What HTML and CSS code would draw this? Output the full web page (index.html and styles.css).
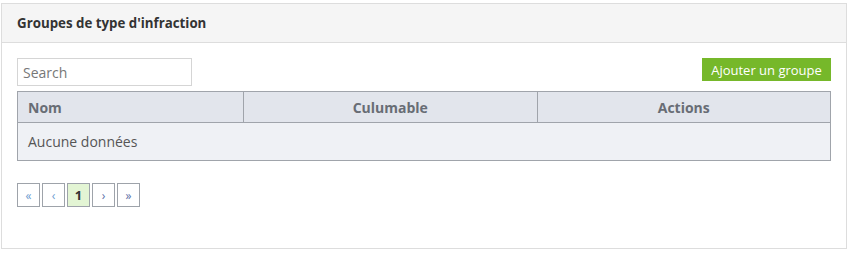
FILE: index.html
```html
<!DOCTYPE html>
<html lang="fr">
<head>
<meta charset="utf-8">
<title>Groupes de type d'infraction</title>
<link rel="stylesheet" href="styles.css">
</head>
<body>
<div class="panel">
  <div class="panel-heading">Groupes de type d'infraction</div>
  <div class="panel-body">
    <div class="toolbar">
      <input class="search" type="text" placeholder="Search">
      <button class="btn-add">Ajouter un groupe</button>
    </div>
    <table class="grid">
      <thead>
        <tr>
          <th class="col-nom">Nom</th>
          <th class="col-mid">Culumable</th>
          <th class="col-mid">Actions</th>
        </tr>
      </thead>
      <tbody>
        <tr><td colspan="3">Aucune données</td></tr>
      </tbody>
    </table>
    <div class="pager">
      <span class="pg arrow">«</span>
      <span class="pg arrow">‹</span>
      <span class="pg active">1</span>
      <span class="pg arrow dim">›</span>
      <span class="pg arrow dim">»</span>
    </div>
  </div>
</div>
</body>
</html>
```

FILE: styles.css
```css
html, body {
  margin: 0;
  padding: 0;
  background: #ffffff;
}
body {
  font-family: "Open Sans", "Liberation Sans", sans-serif;
  font-size: 14px;
  color: #555;
}
.panel {
  margin: 3px 2px 0 1px;
  height: 244px;
  border: 1px solid #dddddd;
  background: #fff;
  box-sizing: content-box;
}
.panel-heading {
  box-sizing: border-box;
  background: #f5f5f5;
  border-bottom: 1px solid #dddddd;
  height: 39px;
  padding: 0 15px;
  display: flex;
  align-items: center;
  font-size: 13.3px;
  font-weight: 700;
  color: #333;
}
.panel-body {
  padding: 15px 15px 0 15px;
}
.toolbar {
  display: flex;
  justify-content: space-between;
  align-items: flex-start;
  margin-bottom: 5px;
}
.search {
  width: 175px;
  height: 28px;
  box-sizing: border-box;
  border: 1px solid #d5d5d5;
  padding: 0 5px;
  margin: 0;
  font-family: inherit;
  font-size: 14px;
  color: #555;
  outline: none;
}
.search::placeholder {
  color: #777;
}
.btn-add {
  width: 129px;
  height: 23px;
  border: 0;
  margin: 0;
  padding: 0;
  background: #76b82a;
  color: #fff;
  font-family: inherit;
  font-size: 13px;
}
.grid {
  width: 814px;
  border-collapse: collapse;
  table-layout: fixed;
}
.grid th {
  height: 31px;
  box-sizing: border-box;
  background: #e2e5ec;
  border: 1px solid #a0a4ab;
  font-size: 14px;
  font-weight: 700;
  color: #686d75;
  padding: 0 10px;
}
.grid th.col-nom {
  width: 226px;
  text-align: left;
}
.grid th.col-mid {
  text-align: center;
}
.grid td {
  height: 38px;
  box-sizing: border-box;
  background: #eff1f5;
  border: 1px solid #a0a4ab;
  padding: 0 10px;
  color: #555;
}
.pager {
  display: flex;
  gap: 2px;
  margin-top: 22px;
}
.pg {
  width: 23px;
  height: 24px;
  box-sizing: border-box;
  border: 1px solid #9ea3aa;
  display: flex;
  align-items: center;
  justify-content: center;
  font-size: 12px;
  color: #6c9bd0;
  background: #fff;
}
.pg.dim {
  color: #5b6fa8;
}
.pg.active {
  background: #e3f5d4;
  color: #333;
  font-weight: 700;
  font-size: 13px;
}
```
